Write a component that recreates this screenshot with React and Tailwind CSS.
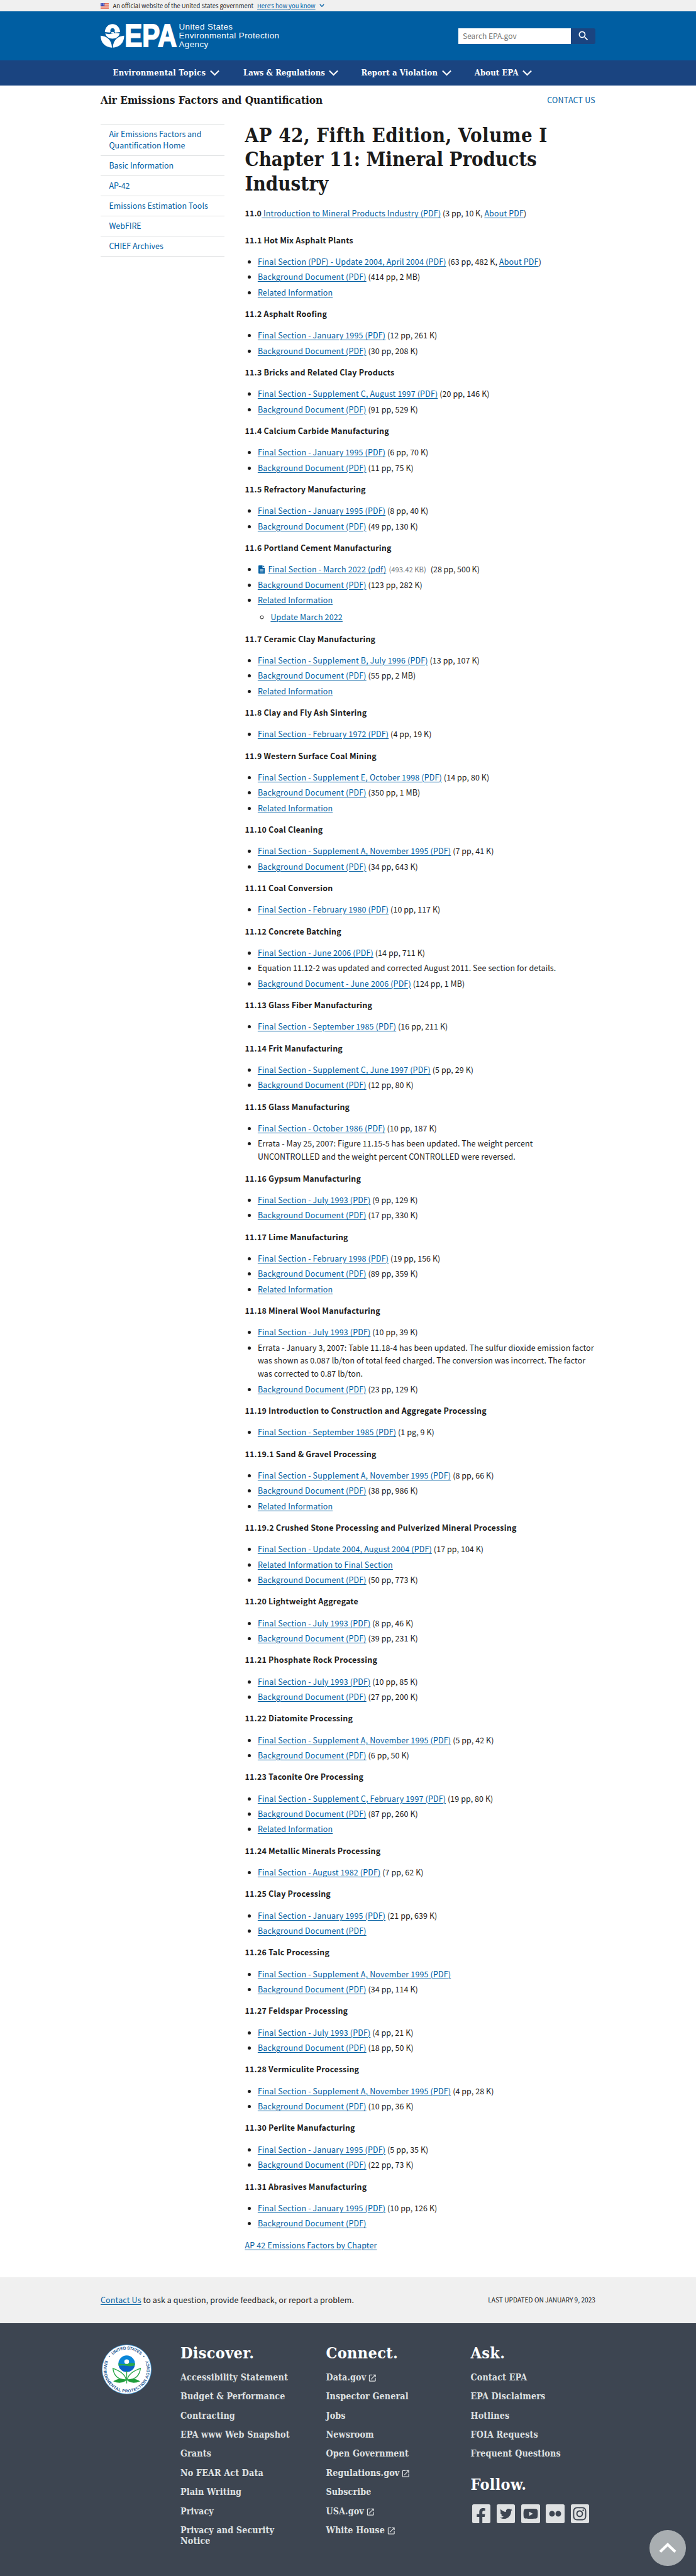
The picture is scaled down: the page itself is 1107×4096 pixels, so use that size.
import React from "react";
import { MdSearch, MdLaunch } from "react-icons/md";
import { FaFacebookF, FaTwitter, FaYoutube, FaInstagram } from "react-icons/fa";

const ABOUT = "About PDF";

const sections = [
  ["11.1 Hot Mix Asphalt Plants", [
    ["Final Section (PDF) - Update 2004, April 2004 (PDF)", "(63 pp, 482 K, ", ABOUT],
    ["Background Document (PDF)", "(414 pp, 2 MB)"],
    ["Related Information"],
  ]],
  ["11.2 Asphalt Roofing", [
    ["Final Section - January 1995 (PDF)", "(12 pp, 261 K)"],
    ["Background Document (PDF)", "(30 pp, 208 K)"],
  ]],
  ["11.3 Bricks and Related Clay Products", [
    ["Final Section - Supplement C, August 1997 (PDF)", "(20 pp, 146 K)"],
    ["Background Document (PDF)", "(91 pp, 529 K)"],
  ]],
  ["11.4 Calcium Carbide Manufacturing", [
    ["Final Section - January 1995 (PDF)", "(6 pp, 70 K)"],
    ["Background Document (PDF)", "(11 pp, 75 K)"],
  ]],
  ["11.5 Refractory Manufacturing", [
    ["Final Section - January 1995 (PDF)", "(8 pp, 40 K)"],
    ["Background Document (PDF)", "(49 pp, 130 K)"],
  ]],
  ["11.6 Portland Cement Manufacturing", [
    { file: "Final Section - March 2022 (pdf)", size: "(493.42 KB)", note: "(28 pp, 500 K)" },
    ["Background Document (PDF)", "(123 pp, 282 K)"],
    { parent: "Related Information", child: "Update March 2022" },
  ]],
  ["11.7 Ceramic Clay Manufacturing", [
    ["Final Section - Supplement B, July 1996 (PDF)", "(13 pp, 107 K)"],
    ["Background Document (PDF)", "(55 pp, 2 MB)"],
    ["Related Information"],
  ]],
  ["11.8 Clay and Fly Ash Sintering", [
    ["Final Section - February 1972 (PDF)", "(4 pp, 19 K)"],
  ]],
  ["11.9 Western Surface Coal Mining", [
    ["Final Section - Supplement E, October 1998 (PDF)", "(14 pp, 80 K)"],
    ["Background Document (PDF)", "(350 pp, 1 MB)"],
    ["Related Information"],
  ]],
  ["11.10 Coal Cleaning", [
    ["Final Section - Supplement A, November 1995 (PDF)", "(7 pp, 41 K)"],
    ["Background Document (PDF)", "(34 pp, 643 K)"],
  ]],
  ["11.11 Coal Conversion", [
    ["Final Section - February 1980 (PDF)", "(10 pp, 117 K)"],
  ]],
  ["11.12 Concrete Batching", [
    ["Final Section - June 2006 (PDF)", "(14 pp, 711 K)"],
    { lines: ["Equation 11.12-2 was updated and corrected August 2011. See section for details."] },
    ["Background Document - June 2006 (PDF)", "(124 pp, 1 MB)"],
  ]],
  ["11.13 Glass Fiber Manufacturing", [
    ["Final Section - September 1985 (PDF)", "(16 pp, 211 K)"],
  ]],
  ["11.14 Frit Manufacturing", [
    ["Final Section - Supplement C, June 1997 (PDF)", "(5 pp, 29 K)"],
    ["Background Document (PDF)", "(12 pp, 80 K)"],
  ]],
  ["11.15 Glass Manufacturing", [
    ["Final Section - October 1986 (PDF)", "(10 pp, 187 K)"],
    { lines: [
      "Errata - May 25, 2007: Figure 11.15-5 has been updated. The weight percent",
      "UNCONTROLLED and the weight percent CONTROLLED were reversed.",
    ] },
  ]],
  ["11.16 Gypsum Manufacturing", [
    ["Final Section - July 1993 (PDF)", "(9 pp, 129 K)"],
    ["Background Document (PDF)", "(17 pp, 330 K)"],
  ]],
  ["11.17 Lime Manufacturing", [
    ["Final Section - February 1998 (PDF)", "(19 pp, 156 K)"],
    ["Background Document (PDF)", "(89 pp, 359 K)"],
    ["Related Information"],
  ]],
  ["11.18 Mineral Wool Manufacturing", [
    ["Final Section - July 1993 (PDF)", "(10 pp, 39 K)"],
    { lines: [
      "Errata - January 3, 2007: Table 11.18-4 has been updated. The sulfur dioxide emission factor",
      "was shown as 0.087 lb/ton of total feed charged. The conversion was incorrect. The factor",
      "was corrected to 0.87 lb/ton.",
    ] },
    ["Background Document (PDF)", "(23 pp, 129 K)"],
  ]],
  ["11.19 Introduction to Construction and Aggregate Processing", [
    ["Final Section - September 1985 (PDF)", "(1 pg, 9 K)"],
  ]],
  ["11.19.1 Sand & Gravel Processing", [
    ["Final Section - Supplement A, November 1995 (PDF)", "(8 pp, 66 K)"],
    ["Background Document (PDF)", "(38 pp, 986 K)"],
    ["Related Information"],
  ]],
  ["11.19.2 Crushed Stone Processing and Pulverized Mineral Processing", [
    ["Final Section - Update 2004, August 2004 (PDF)", "(17 pp, 104 K)"],
    ["Related Information to Final Section"],
    ["Background Document (PDF)", "(50 pp, 773 K)"],
  ]],
  ["11.20 Lightweight Aggregate", [
    ["Final Section - July 1993 (PDF)", "(8 pp, 46 K)"],
    ["Background Document (PDF)", "(39 pp, 231 K)"],
  ]],
  ["11.21 Phosphate Rock Processing", [
    ["Final Section - July 1993 (PDF)", "(10 pp, 85 K)"],
    ["Background Document (PDF)", "(27 pp, 200 K)"],
  ]],
  ["11.22 Diatomite Processing", [
    ["Final Section - Supplement A, November 1995 (PDF)", "(5 pp, 42 K)"],
    ["Background Document (PDF)", "(6 pp, 50 K)"],
  ]],
  ["11.23 Taconite Ore Processing", [
    ["Final Section - Supplement C, February 1997 (PDF)", "(19 pp, 80 K)"],
    ["Background Document (PDF)", "(87 pp, 260 K)"],
    ["Related Information"],
  ]],
  ["11.24 Metallic Minerals Processing", [
    ["Final Section - August 1982 (PDF)", "(7 pp, 62 K)"],
  ]],
  ["11.25 Clay Processing", [
    ["Final Section - January 1995 (PDF)", "(21 pp, 639 K)"],
    ["Background Document (PDF)"],
  ]],
  ["11.26 Talc Processing", [
    ["Final Section - Supplement A, November 1995 (PDF)"],
    ["Background Document (PDF)", "(34 pp, 114 K)"],
  ]],
  ["11.27 Feldspar Processing", [
    ["Final Section - July 1993 (PDF)", "(4 pp, 21 K)"],
    ["Background Document (PDF)", "(18 pp, 50 K)"],
  ]],
  ["11.28 Vermiculite Processing", [
    ["Final Section - Supplement A, November 1995 (PDF)", "(4 pp, 28 K)"],
    ["Background Document (PDF)", "(10 pp, 36 K)"],
  ]],
  ["11.30 Perlite Manufacturing", [
    ["Final Section - January 1995 (PDF)", "(5 pp, 35 K)"],
    ["Background Document (PDF)", "(22 pp, 73 K)"],
  ]],
  ["11.31 Abrasives Manufacturing", [
    ["Final Section - January 1995 (PDF)", "(10 pp, 126 K)"],
    ["Background Document (PDF)"],
  ]],
];

function Link({ children }) {
  return (
    <a href="#" className="text-[#005ea2] underline decoration-1 underline-offset-[1.5px] tracking-[0.18px]">{children}</a>
  );
}

function FileIcon() {
  return (
    <svg viewBox="0 0 16 20" className="mr-[5px] ml-[1px] inline-block h-[13px] w-[10.5px] align-[-2px]">
      <path d="M1.5 0H10v6h6v12.500a1.500 1.500 0 0 1-1.500 1.500h-13A1.500 1.500 0 0 1 0 18.500v-17A1.500 1.500 0 0 1 1.500 0Z" fill="#005ea2" />
      <path d="M11.200 0 16 4.800h-4.800Z" fill="#005ea2" />
      <path d="M3.500 10.500h9M3.500 13.500h9M3.500 16.300h9" stroke="#fff" strokeWidth="1.300" />
    </svg>
  );
}

function Item({ item }) {
  if (item.lines) {
    return (
      <li className="mb-[3.48px] tracking-[0.09px] last:mb-0">
        {item.lines.map((line) => (
          <span key={line} className="block whitespace-nowrap">{line}</span>
        ))}
      </li>
    );
  }
  if (item.file) {
    return (
      <li className="mb-[3.48px]">
        <FileIcon />
        <Link>{item.file}</Link>
        <span className="ml-[4px] text-[11.300px] text-[#71767a]">{item.size}</span>
        <span className="ml-[7px]">{item.note}</span>
      </li>
    );
  }
  if (item.parent) {
    return (
      <li>
        <Link>{item.parent}</Link>
        <ul className="mt-[6.3px] list-[circle] pl-[20.5px]">
          <li><Link>{item.child}</Link></li>
        </ul>
      </li>
    );
  }
  return (
    <li className="mb-[3.48px] last:mb-0">
      <Link>{item[0]}</Link>
      {item[1] && <span className="tracking-[0.09px]"> {item[1]}</span>}
      {item[2] && <><Link>{item[2]}</Link>)</>}
    </li>
  );
}

function Flag() {
  return (
    <svg viewBox="0 0 16 11" className="h-[9px] w-[13px]">
      <rect width="16" height="11" fill="#fff" />
      {[0, 1, 2, 3, 4, 5, 6].map((i) => (
        <rect key={i} y={i * 1.7} width="16" height="0.900" fill="#db3e1f" />
      ))}
      <rect width="7.500" height="6" fill="#1e33b1" />
      {[1, 3, 5].map((y) => [1, 3, 5].map((x) => (
        <rect key={x + "-" + y} x={x} y={y - 0.4} width="0.900" height="0.900" fill="#fff" />
      )))}
    </svg>
  );
}

function Logo() {
  return (
    <svg viewBox="0 0 446 139" className="h-[38px] w-[122px]" fill="#fff" overflow="visible">
      <path d="M25 48A44 47 0 0 1 113 48L85 50L81 44A13 13 0 1 0 58 44L53 50Z" />
      <path d="M60 50Q69 44 79 50L76 54H63Z" />
      <path d="M27 56Q48 62 69 56T111 56C106 75 90 86 69 86C48 86 32 75 27 56Z" />
      <path d="M0 69C32 71 64 90 66 138C30 138 0 112 0 69Z" />
      <path d="M137 69C105 71 73 90 71 138C107 138 137 112 137 69Z" />
      <text x="140" y="132" className="font-bold" fontFamily="Liberation Sans, sans-serif" fontSize="182" textLength="304" lengthAdjust="spacingAndGlyphs" stroke="#fff" strokeWidth="7">EPA</text>
    </svg>
  );
}

function Chevron() {
  return (
    <svg viewBox="0 0 16 10" className="ml-[6.5px] h-[9.500px] w-[15px]" fill="none" stroke="#fff" strokeWidth="2.300">
      <path d="M1 1.500 8 8.500 15 1.500" />
    </svg>
  );
}

function Seal() {
  return (
    <svg viewBox="0 0 96 96" className="h-[79px] w-[79px]">
      <defs>
        <path id="sealTop" d="M9.500 48A38.500 38.500 0 0 1 86.500 48" />
        <path id="sealRing" d="M7.670 29.200A44.500 44.500 0 1 0 88.330 29.200" />
      </defs>
      <circle cx="48" cy="48" r="47.500" fill="#fff" stroke="#3b9ae0" strokeWidth="1" />
      <g fill="#1f5a94" fontFamily="Liberation Sans, sans-serif" fontSize="8" fontWeight="700">
        <text textLength="59"><textPath href="#sealTop" startOffset="31">UNITED STATES</textPath></text>
        <text textLength="175"><textPath href="#sealRing" startOffset="1.500">ENVIRONMENTAL PROTECTION AGENCY</textPath></text>
        <circle cx="14.400" cy="22.800" r="1.200" />
        <circle cx="81.200" cy="22.800" r="1.200" />
      </g>
      <circle cx="48" cy="37" r="16" fill="#0a86d8" />
      <path d="M32.500 41A16 16 0 0 0 63.500 41Z" fill="#0b63c5" />
      <path d="M32 36Q40 39 48 37T64 36V40Q56 43 48 41T32.300 41Z" fill="#2ba84a" />
      <circle cx="48" cy="33" r="4.500" fill="#fff" />
      <g fill="none" stroke="#2ba84a" strokeWidth="1.700">
        <path d="M48 51V75M47 68C45 58 36 51 21.500 46C23 60 30 68 47 68Z" />
        <path d="M49 68C51 58 60 51 74.500 46C73 60 66 68 49 68Z" />
      </g>
      <path d="M22 71Q36 62 47 70Q36 77 22 71ZM74 71Q60 62 49 70Q60 77 74 71Z" fill="#1f9d3a" />
    </svg>
  );
}

const discover = ["Accessibility Statement", "Budget & Performance", "Contracting", "EPA www Web Snapshot", "Grants", "No FEAR Act Data", "Plain Writing", "Privacy", "Privacy and Security Notice"];
const connect = [["Data.gov", 1], ["Inspector General"], ["Jobs"], ["Newsroom"], ["Open Government"], ["Regulations.gov", 1], ["Subscribe"], ["USA.gov", 1], ["White House", 1]];
const ask = ["Contact EPA", "EPA Disclaimers", "Hotlines", "FOIA Requests", "Frequent Questions"];

const SERIF = "font-['DejaVu_Serif_Condensed','DejaVu_Serif',serif] font-bold";

function FooterHeading({ children }) {
  return <h3 className="text-[25px] leading-[30px] tracking-[0.35px] text-white">{children}</h3>;
}

function FooterLink({ children, external }) {
  return (
    <li className="flex items-center">
      <a href="#">{children}</a>
      {external ? <MdLaunch className="ml-[3px] h-[14.500px] w-[14.500px] translate-y-[1px]" /> : null}
    </li>
  );
}

function Social({ children }) {
  return (
    <a href="#" className="flex h-[29.500px] w-[29.500px] items-center justify-center overflow-hidden rounded-[2.500px] bg-[#dfe1e2] text-[#3d4551]">
      {children}
    </a>
  );
}

export default function App() {
  return (
    <div className="flex h-[4096px] w-[1107px] flex-col overflow-hidden bg-white font-['Noto_Sans_CJK_SC','Noto_Sans',sans-serif] text-[12.45px] leading-[20.86px] text-[#1b1b1b]">
      <div className="flex h-[18px] items-center bg-[#f0f0f0] pl-[160px] text-[9.43px] leading-[18px]">
        <Flag />
        <span className="ml-[6.5px] whitespace-nowrap">An official website of the United States government</span>
        <a href="#" className="ml-[6px] whitespace-nowrap text-[#005ea2] underline underline-offset-1">
          Here<span className="font-['Open_Sans']">’</span>s how you know
        </a>
        <svg viewBox="0 0 10 7" className="ml-[6px] h-[6px] w-[8px]" fill="none" stroke="#005ea2" strokeWidth="1.700">
          <path d="M1 1 5 5 9 1" />
        </svg>
      </div>

      <header className="h-[78px] bg-[#005ea2]">
        <div className="flex pl-[160px]">
          <div className="shrink-0 pt-[19.500px]"><Logo /></div>
          <div className="ml-[2.500px] w-[300px] shrink-0 pt-[18.300px] font-['Liberation_Sans'] text-[13.400px] leading-[13.700px] tracking-[0.43px] text-white">
            United States<br />Environmental Protection<br />Agency
          </div>
          <div className="ml-[144.500px] flex shrink-0 pt-[26.500px]">
            <div className="flex h-[25px] w-[179px] items-center bg-white pl-[7px] text-[12px] text-[#757575]">Search EPA.gov</div>
            <button className="flex h-[25px] w-[39px] items-center justify-center rounded-r-[3px] bg-[#1a4480] text-white">
              <MdSearch className="h-[20px] w-[20px]" />
            </button>
          </div>
        </div>
      </header>

      <nav className={`flex h-[40px] items-center bg-[#1a4480] pl-[179.500px] text-[13px] leading-[20px] text-white ${SERIF}`}>
        <div className="flex w-[207.500px] items-center tracking-[0.28px]">Environmental Topics<Chevron /></div>
        <div className="flex w-[187.500px] items-center">Laws &amp; Regulations<Chevron /></div>
        <div className="flex w-[180.300px] items-center tracking-[0.1px]">Report a Violation<Chevron /></div>
        <div className="flex items-center tracking-[0.1px]">About EPA<Chevron /></div>
      </nav>

      <div className="flex h-[60px] w-[947px] justify-between pl-[160px]">
        <h2 className={`pt-[13px] text-[17.1px] leading-[20px] ${SERIF}`}>Air Emissions Factors and Quantification</h2>
        <a href="#" className="pt-[12.500px] tracking-[0.25px] text-[#005ea2]">CONTACT US</a>
      </div>

      <div className="flex h-[3425.300px] shrink-0 pl-[160px]">
        <aside className="w-[197px] pt-[1px]">
          <ul className="border-b border-[#dfe1e2] leading-[18px] text-[#005ea2]">
            {["Air Emissions Factors and Quantification Home", "Basic Information", "AP-42", "Emissions Estimation Tools", "WebFIRE", "CHIEF Archives"].map((t) => (
              <li key={t} className="border-t border-[#dfe1e2] pt-[6px] pr-[12px] pb-[7px] pl-[13.400px]">
                <a href="#" className="block">{t}</a>
              </li>
            ))}
          </ul>
        </aside>
        <main className="ml-[32.500px] w-[570px] whitespace-nowrap">
          <h1 className={`text-[31px] leading-[38.26px] ${SERIF}`}>
            <span className="block tracking-[0.47px]">AP 42, Fifth Edition, Volume I</span>
            <span className="block tracking-[-0.07px]">Chapter 11: Mineral Products</span>
            <span className="block">Industry</span>
          </h1>
          <p className="mt-[18.600px] mb-[21.400px]">
            <b className="tracking-[0.1px]">11.0</b>
            <Link> Introduction to Mineral Products Industry (PDF)</Link> (3 pp, 10 K, <Link>{ABOUT}</Link>)
          </p>
          {sections.map(([title, items]) => (
            <section key={title}>
              <h4 className="mb-[13.49px] font-bold tracking-[0.22px]">{title}</h4>
              <ul className="mb-[13.49px] list-disc pl-[20.400px]">
                {items.map((item, i) => <Item key={i} item={item} />)}
              </ul>
            </section>
          ))}
          <p><Link>AP 42 Emissions Factors by Chapter</Link></p>
        </main>
      </div>

      <div className="flex h-[73px] shrink-0 items-center justify-between bg-[#f0f0f0] pr-[160px] pl-[160px]">
        <span className="tracking-[0.13px]"><Link>Contact Us</Link> to ask a question, provide feedback, or report a problem.</span>
        <span className="text-[10.200px]">LAST UPDATED ON JANUARY 9, 2023</span>
      </div>

      <footer className={`relative flex grow bg-[#3d4551] pt-[33px] pl-[161.500px] text-[14.200px] leading-[17.1px] tracking-[0.12px] text-[#dfe1e2] ${SERIF}`}>
        <div className="w-[125.500px] pt-[1px]"><Seal /></div>
        <div className="w-[231.500px]">
          <FooterHeading>Discover.</FooterHeading>
          <ul className="mt-[14.400px] flex w-[190px] flex-col gap-[13.350px]">
            {discover.map((t) => <FooterLink key={t}>{t}</FooterLink>)}
          </ul>
        </div>
        <div className="w-[230px]">
          <FooterHeading>Connect.</FooterHeading>
          <ul className="mt-[14.400px] flex flex-col gap-[13.350px]">
            {connect.map(([t, ext]) => <FooterLink key={t} external={ext}>{t}</FooterLink>)}
          </ul>
        </div>
        <div>
          <FooterHeading>Ask.</FooterHeading>
          <ul className="mt-[14.400px] mb-[25.100px] flex flex-col gap-[13.350px]">
            {ask.map((t) => <FooterLink key={t}>{t}</FooterLink>)}
          </ul>
          <FooterHeading>Follow.</FooterHeading>
          <div className="mt-[16.400px] ml-[2px] flex gap-[9.800px]">
            <Social><FaFacebookF className="h-[25px] w-[16px] translate-y-[4px]" /></Social>
            <Social><FaTwitter className="h-[20px] w-[20px]" /></Social>
            <Social><FaYoutube className="h-[24px] w-[24px]" /></Social>
            <Social>
              <svg viewBox="0 0 20 10" className="h-[10px] w-[20px]" fill="currentColor"><circle cx="5" cy="5" r="4.500" /><circle cx="15" cy="5" r="4.500" /></svg>
            </Social>
            <Social><FaInstagram className="h-[24px] w-[24px]" /></Social>
          </div>
        </div>
        <a href="#" className="absolute right-[16.500px] bottom-[16px] flex h-[57.500px] w-[57.500px] items-center justify-center rounded-full bg-[#a9aeb1]">
          <svg viewBox="0 0 30 18" className="h-[18px] w-[30px]" fill="none" stroke="#fff" strokeWidth="4.500">
            <path d="M3 15.500 15 4 27 15.500" />
          </svg>
        </a>
      </footer>
    </div>
  );
}
